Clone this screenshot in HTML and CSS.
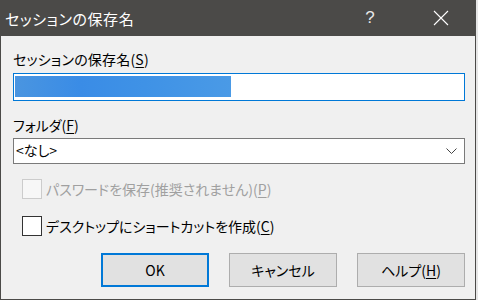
FILE: index.html
```html
<!DOCTYPE html>
<html lang="ja">
<head>
<meta charset="utf-8">
<link rel="stylesheet" href="styles.css">
</head>
<body>
<div class="window">
  <div class="titlebar">
    <span class="title">セッションの保存名</span>
    <span class="tb-help">?</span>
    <span class="tb-close"><svg width="16" height="16" viewBox="0 0 16 16"><path d="M1 1L15 15M15 1L1 15" stroke="#ffffff" stroke-width="1.1" fill="none"/></svg></span>
  </div>
  <div class="content">
    <div class="lbl lbl-first">セッションの保存名(<u>S</u>)</div>
    <div class="input"><span class="sel"></span></div>
    <div class="lbl lbl-second">フォルダ(<u>F</u>)</div>
    <div class="combo"><span class="combo-text">&lt;なし&gt;</span><svg class="chev" width="11" height="6" viewBox="0 0 11 6"><path d="M0.5 0.5L5.5 5.5L10.5 0.5" stroke="#444" stroke-width="1" fill="none"/></svg></div>
    <div class="check disabled check-first"><span class="box"></span><span>パスワードを保存(推奨されません)(<u>P</u>)</span></div>
    <div class="check check-second"><span class="box"></span><span>デスクトップにショートカットを作成(<u>C</u>)</span></div>
    <div class="buttons">
      <div class="btn default">OK</div>
      <div class="btn">キャンセル</div>
      <div class="btn">ヘルプ(<u>H</u>)</div>
    </div>
  </div>
</div>
</body>
</html>
```
FILE: styles.css
```css
* { box-sizing: border-box; }
html, body { margin: 0; padding: 0; }
body {
  width: 478px;
  height: 300px;
  background: #e6e6e6;
  font-family: "Noto Sans CJK JP", "Noto Sans", sans-serif;
  font-feature-settings: "palt";
  color: #000;
  overflow: hidden;
}
.window {
  width: 476px;
  height: 300px;
  background: #f0f0f0;
  border-left: 1px solid #4b4a48;
  border-right: 1px solid #4b4a48;
  border-bottom: 1px solid #4b4a48;
}
.titlebar {
  height: 36px;
  background: #4b4a48;
  display: flex;
  align-items: center;
  color: #fff;
}
.title {
  font-size: 15px;
  letter-spacing: 0.6px;
  margin-left: 4px;
  flex: 1;
  line-height: 20px;
  padding-top: 1px;
}
.tb-help {
  font-family: "Liberation Sans", sans-serif;
  font-size: 17px;
  color: #e8e8e8;
  width: 20px;
  margin-right: 53px;
  text-align: center;
}
.tb-close {
  width: 16px;
  height: 16px;
  margin-right: 26px;
  display: flex;
}
.content {
  padding: 0 10px 0 12px;
}
.lbl {
  font-size: 14px;
  line-height: 20px;
  height: 20px;
}
.lbl-first { margin-top: 13px; letter-spacing: 0.2px; }
.lbl-second { margin-top: 14px; }
.input {
  margin-top: 4px;
  height: 28px;
  border: 1px solid #0078d7;
  background: #fff;
  padding: 2px 0 3px 1px;
  display: flex;
}
.sel {
  display: block;
  width: 216px;
  height: 21px;
  background: linear-gradient(90deg, #4a95e0 0%, #3a8ce6 30%, #3f92e6 60%, #4a9ae6 100%);
}
.combo {
  margin-top: 3px;
  height: 26px;
  border: 1px solid #7a7a7a;
  background: #fff;
  display: flex;
  align-items: center;
  padding: 0 7px 0 2px;
}
.combo-text {
  flex: 1;
  font-size: 14px;
  line-height: 20px;
  margin-top: -3px;
}
.check {
  display: flex;
  align-items: center;
  height: 20px;
  margin-left: 9px;
  font-size: 14px;
  line-height: 20px;
}
.check-first { margin-top: 15px; }
.check-second { margin-top: 17px; }
.box {
  width: 20px;
  height: 20px;
  border: 1px solid #333;
  background: #fff;
  margin-right: 4px;
  flex: none;
}
.disabled { color: #a0a0a0; }
.disabled .box { border-color: #cccccc; background: #f7f7f7; }
.buttons {
  margin-top: 17px;
  display: flex;
  justify-content: flex-end;
  gap: 20px;
}
.btn {
  width: 108px;
  height: 34px;
  background: #e1e1e1;
  border: 1px solid #adadad;
  display: flex;
  align-items: center;
  justify-content: center;
  font-size: 14px;
  line-height: 20px;
}
.btn.default {
  border: 2px solid #0078d7;
}
u { text-decoration-thickness: 1px; text-underline-offset: 2px; }
```
